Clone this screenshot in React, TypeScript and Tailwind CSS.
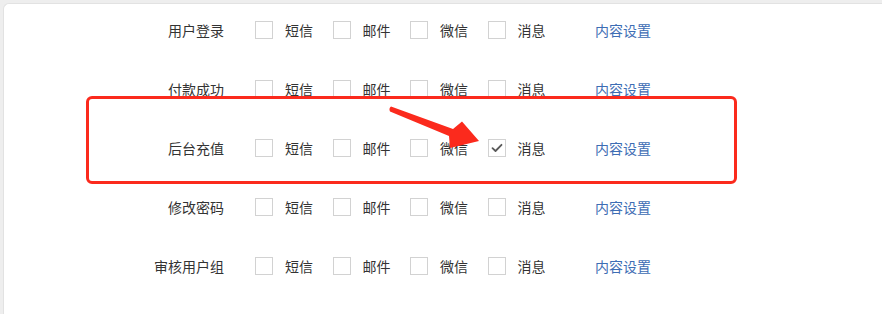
import React from "react";

const rows = [
  { label: "用户登录", checked: -1 },
  { label: "付款成功", checked: -1 },
  { label: "后台充值", checked: 3 },
  { label: "修改密码", checked: -1 },
  { label: "审核用户组", checked: -1 },
];
const opts = ["短信", "邮件", "微信", "消息"];

function Box({ checked }: { checked: boolean }) {
  return (
    <span className="flex h-[18px] w-[18px] shrink-0 items-center justify-center border border-[#d2d2d2] bg-white">
      {checked && (
        <svg width="12" height="10" viewBox="0 0 12 10">
          <path d="M1.5 5.2 L4.5 8 L10.5 1.8" fill="none" stroke="#5a5a5a" strokeWidth="1.8" strokeLinecap="round" strokeLinejoin="round" />
        </svg>
      )}
    </span>
  );
}

export default function App() {
  return (
    <div
      className="relative h-[314px] w-[882px] overflow-hidden bg-[#eeeeee] pl-[3px] pt-[3px] text-[14px] text-[#333333]"
      style={{ fontFamily: '"Noto Sans CJK SC", "Noto Sans", sans-serif' }}
    >
      <div className="h-[320px] rounded-tl-[6px] border-l border-t border-[#e2e2e2] bg-white pt-[17px]">
        <div className="flex flex-col gap-y-[41px]">
          {rows.map((r) => (
            <div key={r.label} className="flex h-[18px] items-center leading-[18px]">
              <span className="w-[220px] whitespace-nowrap text-right">{r.label}</span>
              <div className="ml-[31px] flex items-center">
                {opts.map((o, i) => (
                  <div key={o} className="flex w-[77.5px] items-center">
                    <Box checked={r.checked === i} />
                    <span className="ml-[12px] whitespace-nowrap">{o}</span>
                  </div>
                ))}
              </div>
              <span className="ml-[30px] whitespace-nowrap text-[#3d6db4]">内容设置</span>
            </div>
          ))}
        </div>
      </div>
      <div className="absolute left-[86px] top-[96px] h-[88px] w-[651px] rounded-[6px] border-[3px] border-[#fb2a1d]" />
      <svg className="absolute left-0 top-0" width="882" height="314" viewBox="0 0 882 314">
        <path
          d="M391 106.5 Q388.5 108.5 390 111.5 L449 136 L450 148 L479 141 L462 121.5 L453 129 Z"
          fill="#fb2a1d"
        />
      </svg>
    </div>
  );
}
